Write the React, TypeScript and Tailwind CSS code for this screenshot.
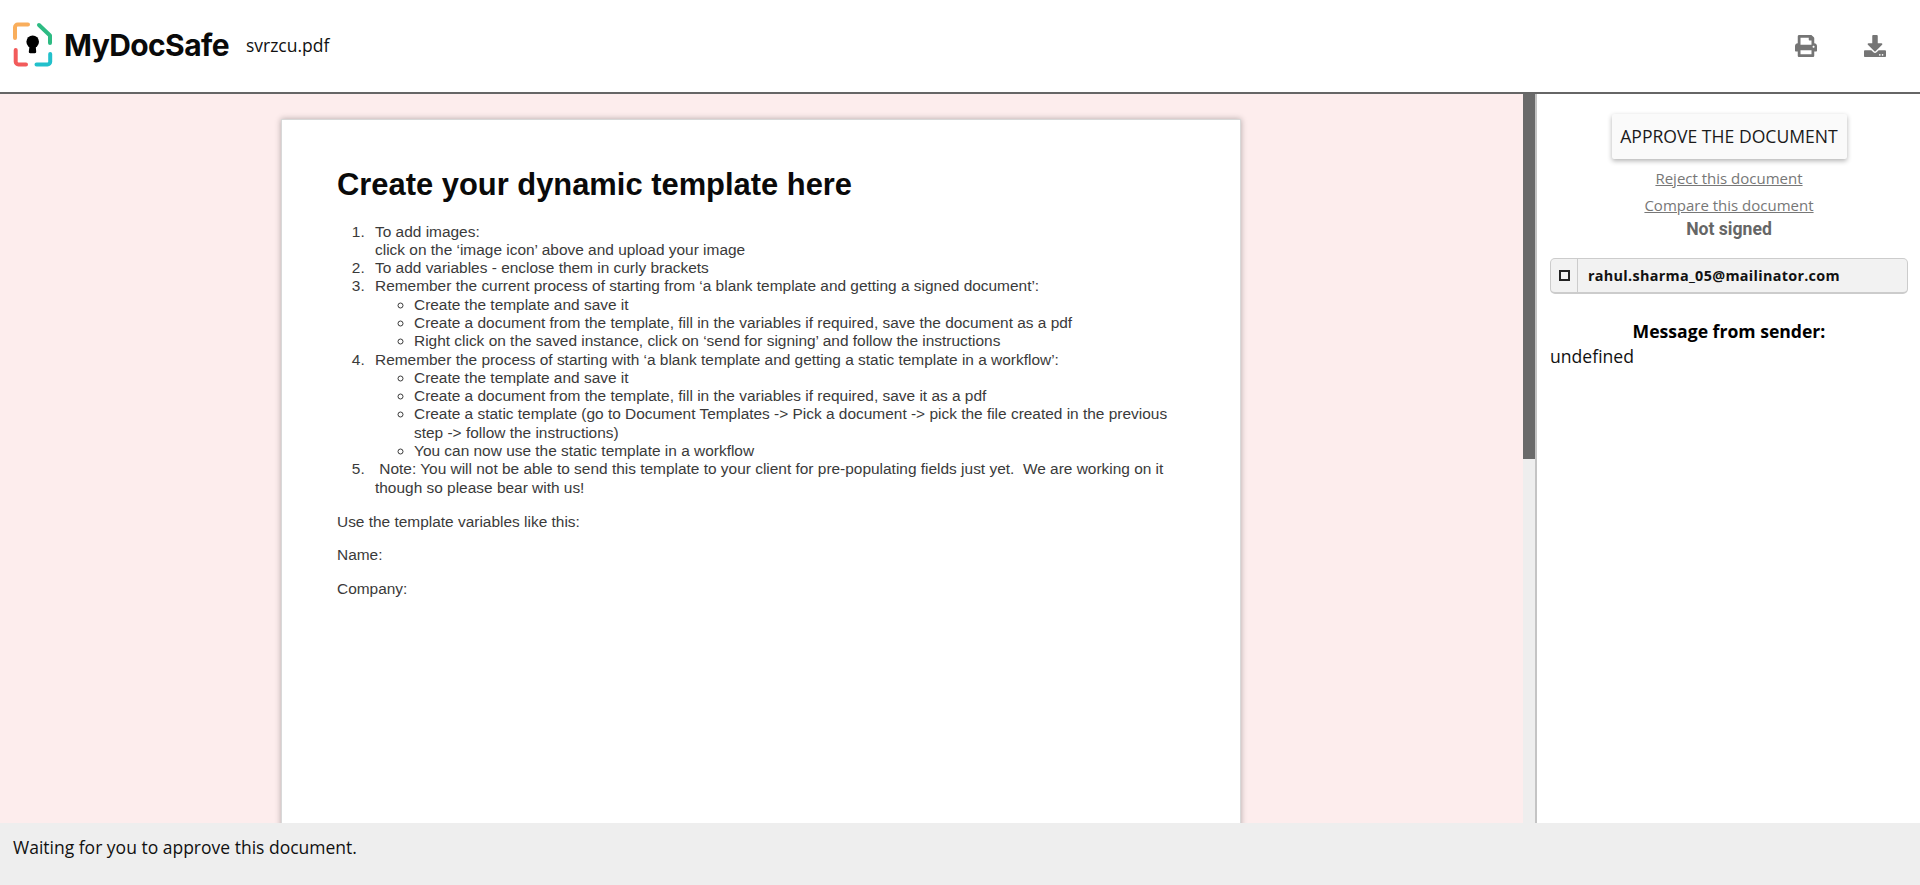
import { FaDownload, FaPrint } from "react-icons/fa";

function Logo() {
  return (
    <svg viewBox="0 0 40 46" className="mb-[4px] h-[46px] w-[40px] shrink-0" fill="none" strokeWidth="4" strokeLinecap="round" strokeLinejoin="round">
      <path d="M15 3.600H4.700a2.700 2.700 0 0 0-2.700 2.700V17" stroke="#f9ae5c" />
      <path d="M26 4l11 10.500V22" stroke="#2dbb83" />
      <path d="M2.700 29v11.700a2.700 2.700 0 0 0 2.700 2.700H13" stroke="#f25b5b" />
      <path d="M23.500 43.400h11a2.700 2.700 0 0 0 2.700-2.700V33" stroke="#22c0cb" />
      <circle cx="19.700" cy="20.700" r="6.300" fill="#000" />
      <path d="M17 22h5.400l.8 8.500a1.500 1.500 0 0 1-1.500 1.800h-4.400a1.500 1.500 0 0 1-1.500-1.800z" fill="#000" />
    </svg>
  );
}

function DocumentPage() {
  return (
    <div className="mt-[25px] ml-[281px] h-[900px] w-[960px] shrink-0 border border-[#d8d8d8] bg-white pt-[46px] pr-[60px] pl-[55px] font-['Liberation_Sans',sans-serif] text-[15.450px] leading-[18.300px] text-[#3a3a3a] shadow-[0_0_6px_rgba(0,0,0,0.3)]">
      <h1 className="mb-[19.500px] text-[30.900px] leading-[37px] font-bold text-[#0a0a0a]">Create your dynamic template here</h1>
      <ol className="list-decimal pl-[32px] [&>li]:pl-[6px]">
        <li>
          To add images:
          <br />
          click on the ‘image icon’ above and upload your image
        </li>
        <li>To add variables - enclose them in curly brackets</li>
        <li>
          Remember the current process of starting from ‘a blank template and getting a signed document’:
          <ul className="list-[circle] pl-[39px]">
            <li>Create the template and save it</li>
            <li>Create a document from the template, fill in the variables if required, save the document as a pdf</li>
            <li>Right click on the saved instance, click on ‘send for signing’ and follow the instructions</li>
          </ul>
        </li>
        <li>
          Remember the process of starting with ‘a blank template and getting a static template in a workflow’:
          <ul className="list-[circle] pl-[39px]">
            <li>Create the template and save it</li>
            <li>Create a document from the template, fill in the variables if required, save it as a pdf</li>
            <li>Create a static template (go to Document Templates -&gt; Pick a document -&gt; pick the file created in the previous step -&gt; follow the instructions)</li>
            <li>You can now use the static template in a workflow</li>
          </ul>
        </li>
        <li>&nbsp;Note: You will not be able to send this template to your client for pre-populating fields just yet.&nbsp; We are working on it though so please bear with us!</li>
      </ol>
      <p className="mt-[16px]">Use the template variables like this:</p>
      <p className="mt-[15px]">Name:</p>
      <p className="mt-[15px]">Company:</p>
    </div>
  );
}

export default function App() {
  return (
    <div className="flex h-screen w-full flex-col overflow-hidden bg-white font-['Open_Sans',sans-serif] text-[17.600px] text-[#111]">
      <header className="flex h-[94px] shrink-0 items-center border-b-2 border-[#666] pl-[13px]">
        <Logo />
        <span className="mb-[3px] ml-[11px] font-['Inter',sans-serif] text-[30px] leading-none font-bold tracking-[-0.6px] text-[#0a0a0a]">MyDocSafe</span>
        <span className="mb-[1px] ml-[17px] text-[17.500px]">svrzcu.pdf</span>
        <div className="ml-auto flex items-center gap-[47px] pr-[34px] text-[#757575]">
          <FaPrint className="h-[22px] w-[22px]" />
          <FaDownload className="h-[22px] w-[22px]" />
        </div>
      </header>
      <main className="flex min-h-0 flex-1">
        <div className="flex min-w-0 flex-1 overflow-hidden bg-[#fdeded]">
          <DocumentPage />
        </div>
        <div className="w-[12px] shrink-0 bg-[#eeeeee]">
          <div className="h-[365px] bg-[#6a6a6a]" />
        </div>
        <aside className="flex w-[385px] shrink-0 flex-col border-l-2 border-[#c4c4c4] bg-white pr-[12px] pl-[13px]">
          <button className="mx-auto mt-[20px] h-[45px] w-[235px] rounded-[2px] bg-[#fafafa] text-[#1a1a1a] shadow-[0_2px_5px_rgba(0,0,0,0.3)]">APPROVE THE DOCUMENT</button>
          <a className="mt-[6px] text-center text-[15px] leading-[27px] text-[#777] underline">Reject this document</a>
          <a className="text-center text-[15px] leading-[27px] text-[#777] underline">Compare this document</a>
          <p className="text-center font-['Roboto',sans-serif] leading-[20px] font-bold text-[#666]">Not signed</p>
          <div className="mt-[19px] flex h-[36px] items-stretch overflow-hidden rounded-[5px] border border-b-2 border-[#ccc] bg-[#f2f2f2]">
            <div className="flex w-[27px] shrink-0 items-center justify-center border-r border-[#ccc]">
              <span className="h-[11px] w-[11px] border-2 border-[#222]" />
            </div>
            <span className="self-center pl-[10px] text-[14.400px] font-bold tracking-[0.3px] text-[#111]">rahul.sharma_05@mailinator.com</span>
          </div>
          <p className="mt-[24px] text-center leading-[26px] font-bold text-black">Message from sender:</p>
          <p className="leading-[24px] text-[#111]">undefined</p>
        </aside>
      </main>
      <footer className="flex h-[62px] shrink-0 items-start bg-[#eeeeee] pt-[12px] pl-[13px] text-[17.500px] leading-[24px]">Waiting for you to approve this document.</footer>
    </div>
  );
}
